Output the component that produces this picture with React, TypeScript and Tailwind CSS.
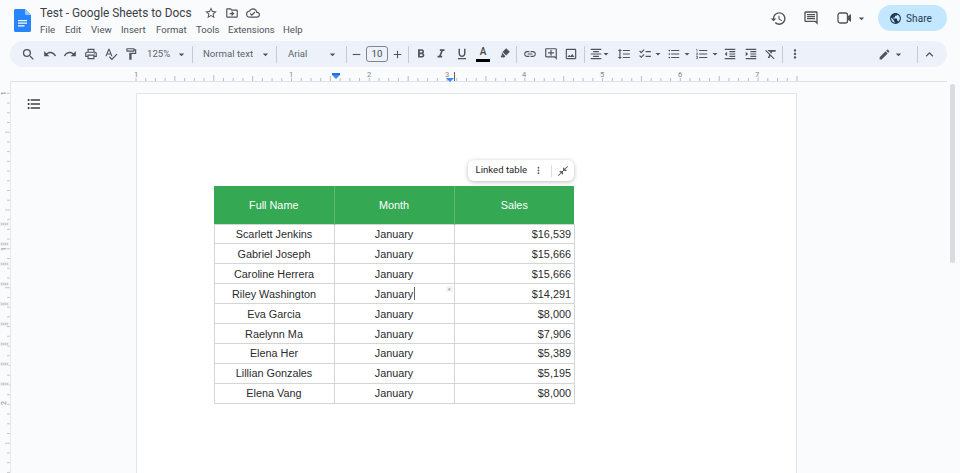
import React from "react";
import {
  MdSearch, MdUndo, MdRedo, MdOutlinePrint, MdSpellcheck, MdOutlineFormatPaint, MdArrowDropDown,
  MdRemove, MdAdd, MdFormatBold, MdFormatItalic, MdFormatUnderlined, MdLink, MdOutlineAddComment,
  MdOutlineImage, MdFormatAlignCenter, MdFormatLineSpacing, MdChecklist, MdFormatListBulleted,
  MdFormatListNumbered, MdFormatIndentDecrease, MdFormatIndentIncrease, MdFormatClear, MdMoreVert,
  MdEdit, MdKeyboardArrowUp, MdStarBorder, MdOutlineDriveFileMove, MdOutlineCloudDone, MdHistory,
  MdOutlineComment, MdPublic, MdCloseFullscreen,
} from "react-icons/md";

const rows: [string, string][] = [
  ["Scarlett Jenkins", "$16,539"],
  ["Gabriel Joseph", "$15,666"],
  ["Caroline Herrera", "$15,666"],
  ["Riley Washington", "$14,291"],
  ["Eva Garcia", "$8,000"],
  ["Raelynn Ma", "$7,906"],
  ["Elena Her", "$5,389"],
  ["Lillian Gonzales", "$5,195"],
  ["Elena Vang", "$8,000"],
];

const Sep = ({ cls }: { cls: string }) => <div className={`h-[17px] w-px bg-[#c7cbd1] shrink-0 ${cls}`} />;

function TopRuler() {
  const inch = 77.76;
  const ticks: React.ReactNode[] = [];
  for (let i = 0; i <= 68; i++) {
    const x = 136 + (i * inch) / 8;
    const h = i % 8 === 0 ? 6 : i % 4 === 0 ? 5 : 3;
    ticks.push(<line key={i} x1={x} x2={x} y1={14 - h} y2={14} stroke="#a8adb2" strokeWidth="0.8" />);
  }
  const labels = [[136, "1"], [291, "1"], [369, "2"], [447, "3"], [524, "4"], [602, "5"], [680, "6"], [757, "7"]] as const;
  return (
    <svg width="960" height="15" className="block shrink-0">
      <line x1="10" x2="947" y1="14.5" y2="14.5" stroke="#dfe1e5" />
      {ticks}
      {labels.map(([x, t], i) => (
        <text key={i} x={x} y="10" fontSize="7.5" fill="#80868b" textAnchor="middle" fontFamily="Roboto, sans-serif" stroke="#f9fbfd" strokeWidth="2" paintOrder="stroke">{t}</text>
      ))}
      <path d="M332 6h8v2l-4 4-4-4z" fill="#4285f4" />
      <rect x="332" y="6" width="8" height="2" fill="#1a73e8" />
      <path d="M446 11h8l-4 4z" fill="#4285f4" />
      <line x1="454.5" x2="454.5" y1="5" y2="14" stroke="#5f6368" />
    </svg>
  );
}

function LeftRuler() {
  const marks = [224, 244, 264, 284, 304, 324, 344, 364, 384];
  const ticks: React.ReactNode[] = [];
  for (let i = 0; i < 40; i++) {
    const y = 11.3 + i * 9.72;
    const big = i % 8 === 4;
    ticks.push(<line key={i} x1={big ? 5 : 7} x2="10" y1={y} y2={y} stroke="#b8bcc0" strokeWidth="0.8" />);
  }
  const labels = [[11.3, "1"], [167, "1"], [321, "2"]] as const;
  return (
    <svg width="11" height="391" className="block shrink-0">
      <line x1="10.5" x2="10.5" y1="0" y2="391" stroke="#e6e8ea" />
      {ticks}
      {marks.map((m) => (
        <g key={m}>
          <rect x="0" y={m - 84} width="9" height="4" fill="#eceef0" />
          <line x1="1" x2="8" y1={m - 82} y2={m - 82} stroke="#a8acb0" strokeDasharray="1.5 0.5" />
        </g>
      ))}
      {labels.map(([y, t], i) => (
        <text key={i} x="4" y={y} fontSize="7" fill="#80868b" textAnchor="middle" dominantBaseline="central" fontFamily="Roboto, sans-serif" transform={`rotate(-90 4 ${y})`}>{t}</text>
      ))}
    </svg>
  );
}

export default function App() {
  const ic = "text-[#50535a] shrink-0";
  return (
    <div className="relative w-[960px] h-[473px] overflow-hidden bg-[#f9fbfd] font-['Roboto',sans-serif] text-[#444746]">
      {/* Header */}
      <div className="flex h-[41px] items-start">
        <svg width="17" height="23" viewBox="0 0 17 23" className="ml-[13.5px] mt-[9px] shrink-0">
          <path d="M1.5 0H11l6 6v15.5a1.5 1.5 0 0 1-1.5 1.5h-14A1.5 1.5 0 0 1 0 21.5v-20A1.5 1.5 0 0 1 1.5 0z" fill="#2684fc" />
          <path d="M11 0l6 6h-4.5A1.5 1.5 0 0 1 11 4.5z" fill="#a1c2fa" />
          <path d="M4 11h9v1.2H4zM4 13.6h9v1.2H4zM4 16.2h6.5v1.2H4z" fill="#fff" />
        </svg>
        <div className="ml-[9.5px] flex flex-col">
          <div className="flex items-center h-[16px] mt-[5px]">
            <span className="text-[11.85px] leading-[16px] text-[#3c3f43] w-[164px] whitespace-nowrap">Test - Google Sheets to Docs</span>
            <MdStarBorder size={14} className={ic} />
            <MdOutlineDriveFileMove size={14} className={`${ic} ml-[7px]`} />
            <MdOutlineCloudDone size={14} className={`${ic} ml-[7px]`} />
          </div>
          <div className="flex h-[14px] mt-[1.5px] text-[9.6px] leading-[14px] text-[#50535a] whitespace-nowrap">
            <span className="w-[25px]">File</span>
            <span className="w-[26px]">Edit</span>
            <span className="w-[30px]">View</span>
            <span className="w-[35px]">Insert</span>
            <span className="w-[40px]">Format</span>
            <span className="w-[32px]">Tools</span>
            <span className="w-[55px]">Extensions</span>
            <span>Help</span>
          </div>
        </div>
        <div className="ml-auto flex items-center h-[26px] mt-[5px]">
          <MdHistory size={17} className={ic} />
          <MdOutlineComment size={16} className={`${ic} ml-[16px]`} />
          <svg width="17" height="14" viewBox="0 0 17 14" className="ml-[18px] shrink-0">
            <rect x="1" y="2" width="9.5" height="10" rx="2" fill="none" stroke="#50535a" strokeWidth="1.3" />
            <path d="M10.5 5.5L14 3v8l-3.5-2.5z" fill="#50535a" />
          </svg>
          <MdArrowDropDown size={13} className={`${ic} ml-[1px]`} />
          <div className="ml-[10px] mr-[13px] w-[69px] h-[26px] rounded-full bg-[#c2e7ff] flex items-center pl-[11px] text-[#1f3a52]">
            <MdPublic size={13} className="shrink-0" />
            <span className="ml-[4px] text-[10px] tracking-[0.1px]">Share</span>
          </div>
        </div>
      </div>

      {/* Toolbar */}
      <div className="flex items-center h-[26px] ml-[10px] w-[937px] rounded-full bg-[#edf2fa] pl-[11px]">
        <MdSearch size={15} className={ic} />
        <MdUndo size={14} className={`${ic} ml-[7px]`} />
        <MdRedo size={14} className={`${ic} ml-[6px]`} />
        <MdOutlinePrint size={14} className={`${ic} ml-[7px]`} />
        <MdSpellcheck size={14} className={`${ic} ml-[6px]`} />
        <MdOutlineFormatPaint size={14} className={`${ic} ml-[6px]`} />
        <span className="ml-[9px] text-[9.6px] w-[28px] shrink-0 text-[#5f6368]">125%</span>
        <MdArrowDropDown size={13} className={`${ic} ml-[0px]`} />
        <Sep cls="ml-[4px]" />
        <span className="ml-[10px] text-[9.6px] w-[52px] shrink-0 whitespace-nowrap text-[#5f6368]">Normal text</span>
        <MdArrowDropDown size={13} className={`${ic} ml-[4px]`} />
        <Sep cls="ml-[4px]" />
        <span className="ml-[11px] text-[9.6px] w-[38px] shrink-0 text-[#5f6368]">Arial</span>
        <MdArrowDropDown size={13} className={`${ic} ml-[0px]`} />
        <Sep cls="ml-[7px]" />
        <MdRemove size={13} className={`${ic} ml-[3px]`} />
        <div className="ml-[3px] w-[22px] h-[16px] border border-[#80868b] rounded-[3px] text-[9.6px] flex items-center justify-center shrink-0">10</div>
        <MdAdd size={13} className={`${ic} ml-[3px]`} />
        <Sep cls="ml-[4px]" />
        <MdFormatBold size={14} className={`${ic} ml-[5px]`} />
        <MdFormatItalic size={14} className={`${ic} ml-[6px]`} />
        <MdFormatUnderlined size={14} className={`${ic} ml-[7px]`} />
        <div className="ml-[7px] w-[14px] h-[16px] flex flex-col items-center shrink-0 text-[10px] leading-[12px] font-medium">
          <span>A</span>
          <div className="w-[14px] h-[3px] bg-black mt-[1px]" />
        </div>
        <svg width="12" height="12" viewBox="0 0 12 12" className="ml-[9px] -mt-[3px] shrink-0">
          <path d="M7.2 1.2l3.6 3.6-3.7 3.7-3.6-3.6zM2.8 5.6l3.6 3.6-1.2 1.2H2.6L1.6 9.4l1.2-1.2z" fill="#50535a" />
        </svg>
        <Sep cls="ml-[5px]" />
        <MdLink size={14} className={`${ic} ml-[6px]`} />
        <MdOutlineAddComment size={14} className={`${ic} ml-[7px]`} />
        <MdOutlineImage size={14} className={`${ic} ml-[6px]`} />
        <Sep cls="ml-[6px]" />
        <MdFormatAlignCenter size={14} className={`${ic} ml-[4px]`} />
        <MdArrowDropDown size={12} className={`${ic} -ml-[3px]`} />
        <MdFormatLineSpacing size={14} className={`${ic} ml-[5px]`} />
        <MdChecklist size={14} className={`${ic} ml-[7px]`} />
        <MdArrowDropDown size={12} className={`${ic} ml-[0px]`} />
        <MdFormatListBulleted size={14} className={`${ic} ml-[3px]`} />
        <MdArrowDropDown size={12} className={`${ic} ml-[0px]`} />
        <MdFormatListNumbered size={14} className={`${ic} ml-[2px]`} />
        <MdArrowDropDown size={12} className={`${ic} ml-[0px]`} />
        <MdFormatIndentDecrease size={14} className={`${ic} ml-[2px]`} />
        <MdFormatIndentIncrease size={14} className={`${ic} ml-[7px]`} />
        <MdFormatClear size={14} className={`${ic} ml-[6px]`} />
        <Sep cls="ml-[4px]" />
        <MdMoreVert size={14} className={`${ic} ml-[5px]`} />
        <MdEdit size={13} className={`${ic} ml-[76px]`} />
        <MdArrowDropDown size={13} className={`${ic} ml-[1px]`} />
        <Sep cls="ml-[12px]" />
        <MdKeyboardArrowUp size={15} className={`${ic} ml-[4px]`} />
      </div>

      <TopRuler />

      {/* Main */}
      <div className="flex items-start">
        <LeftRuler />
        <div className="w-[125px] shrink-0 pl-[15px] pt-[14px]">
          <MdFormatListBulleted size={16} className="text-[#3c4043]" />
        </div>
        <div className="mt-[11px] w-[661px] h-[400px] shrink-0 bg-white border border-[#e3e5e8] pl-[76.5px] pt-[66px] font-['Liberation_Sans',sans-serif]">
          <div className="w-[360px] flex justify-end h-[21px]">
            <div className="w-[106px] h-[21px] bg-white rounded-[6px] shadow-[0_1px_4px_rgba(60,64,67,0.35)] flex items-center pl-[8px] font-['Roboto',sans-serif] text-[9.6px] text-[#1f1f1f] whitespace-nowrap">
              <span className="w-[52px]">Linked table</span>
              <MdMoreVert size={11} className="text-[#5f6368] ml-[5px] shrink-0" />
              <div className="w-px h-[12px] bg-[#dadce0] ml-[7px]" />
              <MdCloseFullscreen size={12} className="text-[#5f6368] ml-[5px] shrink-0" />
            </div>
          </div>
          <table className="mt-[5px] w-[360px] table-fixed border-collapse text-[10.85px] text-[#2a2b2d]">
            <thead>
              <tr className="h-[38px] bg-[#34a853] text-white">
                <th className="font-normal w-[120px] border-r border-[#5cba74] pt-[1px]">Full Name</th>
                <th className="font-normal w-[120px] border-r border-[#5cba74] pt-[1px]">Month</th>
                <th className="font-normal w-[120px] pt-[1px]">Sales</th>
              </tr>
            </thead>
            <tbody>
              {rows.map(([name, sales], i) => (
                <tr key={i} className="h-[19.95px]">
                  <td className="p-0 text-center border border-[#d4d5d7]">{name}</td>
                  <td className="p-0 text-center border border-[#d4d5d7] relative">
                    January
                    {i === 3 && (
                      <>
                        <span className="absolute left-[79px] top-[3px] w-px h-[13px] bg-[#666]" />
                        <span className="absolute left-[111px] top-[2px] w-[7px] h-[6px] bg-[#f1f3f4] text-[#9aa0a6] text-[5px] leading-[6px] text-center">▾</span>
                      </>
                    )}
                  </td>
                  <td className="p-0 pr-[2.5px] text-right border border-[#d4d5d7]">{sales}</td>
                </tr>
              ))}
            </tbody>
          </table>
        </div>
      </div>

      {/* Scrollbar overlay */}
      <div className="absolute left-[950px] top-[84px] w-[5px] h-[179px] rounded-full bg-[#dadce0]" />
    </div>
  );
}
